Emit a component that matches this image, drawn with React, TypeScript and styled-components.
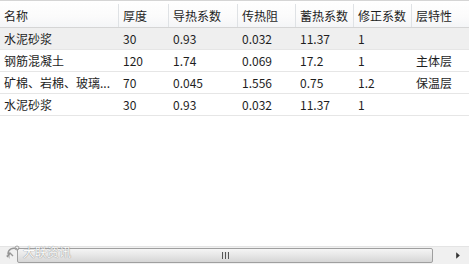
import styled, { createGlobalStyle } from 'styled-components';

const GlobalStyle = createGlobalStyle`
  html, body {
    margin: 0;
    padding: 0;
    background: #ffffff;
  }
  body {
    font-family: "Noto Sans CJK SC", "Liberation Sans", sans-serif;
    font-size: 12px;
    color: #1e1e1e;
  }
`;

const COLS = '118px 50px 69px 58px 58px 58px 58px';

const Frame = styled.div`
  width: 469px;
  height: 264px;
  display: flex;
  flex-direction: column;
  overflow: hidden;
  background: #fff;
`;

const Grid = styled.div`
  flex: 1;
  display: flex;
  flex-direction: column;
`;

const HeaderRow = styled.div`
  display: grid;
  grid-template-columns: ${COLS};
  height: 28px;
  box-sizing: border-box;
  border-top: 1px solid #d5d5d5;
  border-bottom: 1px solid #d5d5d5;
  background: linear-gradient(#ffffff, #fbfbfb 60%, #f4f5f7);
`;

const HeadCell = styled.div<{ $first?: boolean }>`
  display: flex;
  align-items: center;
  padding-left: ${p => (p.$first ? 4 : 4)}px;
  border-left: ${p => (p.$first ? 'none' : '1px solid #dfe2e5')};
  margin: 3px 0 0;
  line-height: 14px;
  white-space: nowrap;
  overflow: hidden;
`;

const Row = styled.div<{ $shade?: boolean }>`
  display: grid;
  grid-template-columns: ${COLS};
  height: 22px;
  box-sizing: border-box;
  border-bottom: 1px solid #e6e6e6;
  background: ${p => (p.$shade ? '#efefef' : '#ffffff')};
`;

const Cell = styled.div<{ $first?: boolean }>`
  display: flex;
  align-items: center;
  padding-left: ${p => (p.$first ? 4 : 5)}px;
  white-space: nowrap;
  overflow: hidden;
`;

const ScrollBar = styled.div`
  position: relative;
  height: 17px;
  display: flex;
  align-items: stretch;
  background: #f0f0f0;
  border-top: 1px solid #e4e4e4;
`;

const ArrowBtn = styled.div<{ $w: number }>`
  width: ${p => p.$w}px;
  display: flex;
  align-items: center;
  justify-content: center;
`;

const Thumb = styled.div`
  flex: 1;
  margin: 1px 0;
  border: 1px solid #9f9f9f;
  border-radius: 2px;
  background: linear-gradient(#f5f5f5, #e6e6e6 50%, #d6d6d6);
  display: flex;
  align-items: center;
  justify-content: center;
`;

const Grip = styled.div`
  width: 7px;
  height: 7px;
  background: repeating-linear-gradient(90deg, #555 0 1px, #e0e0e0 1px 3px);
`;

const Watermark = styled.div`
  position: absolute;
  left: 5px;
  top: -4px;
  display: flex;
  align-items: center;
  gap: 2px;
  color: #ffffff;
  font-size: 12px;
  text-shadow: 0 0 1px #888, 0 0 1px #888;
  opacity: 0.85;
  pointer-events: none;
`;

const header = ['名称', '厚度', '导热系数', '传热阻', '蓄热系数', '修正系数', '层特性'];

const rows = [
  ['水泥砂浆', '30', '0.93', '0.032', '11.37', '1', ''],
  ['钢筋混凝土', '120', '1.74', '0.069', '17.2', '1', '主体层'],
  ['矿棉、岩棉、玻璃...', '70', '0.045', '1.556', '0.75', '1.2', '保温层'],
  ['水泥砂浆', '30', '0.93', '0.032', '11.37', '1', ''],
];

export default function App() {
  return (
    <>
      <GlobalStyle />
      <Frame>
        <Grid>
          <HeaderRow>
            {header.map((h, i) => (
              <HeadCell key={h} $first={i === 0}>{h}</HeadCell>
            ))}
          </HeaderRow>
          {rows.map((r, ri) => (
            <Row key={ri} $shade={ri === 0}>
              {r.map((c, ci) => (
                <Cell key={ci} $first={ci === 0}>{c}</Cell>
              ))}
            </Row>
          ))}
        </Grid>
        <ScrollBar>
          <ArrowBtn $w={17}>
            <svg width="5" height="7" viewBox="0 0 5 7">
              <path d="M4 0 L0 3.5 L4 7 Z" fill="#c8c8c8" />
            </svg>
          </ArrowBtn>
          <Thumb>
            <Grip />
          </Thumb>
          <ArrowBtn $w={36}>
            <svg width="24" height="7" viewBox="0 0 24 7" style={{ marginLeft: 14 }}>
              <path d="M10 0 L14 3.5 L10 7 Z" fill="#333" />
            </svg>
          </ArrowBtn>
          <Watermark>
            <svg width="16" height="16" viewBox="0 0 16 16">
              <path d="M3 10 C3 5 8 3 12 5 M2 13 L5 9 L8 12" stroke="#888" strokeWidth="1.4" fill="none" />
              <circle cx="12" cy="4" r="2" fill="none" stroke="#999" />
            </svg>
            <span>大联资讯</span>
          </Watermark>
        </ScrollBar>
      </Frame>
    </>
  );
}
